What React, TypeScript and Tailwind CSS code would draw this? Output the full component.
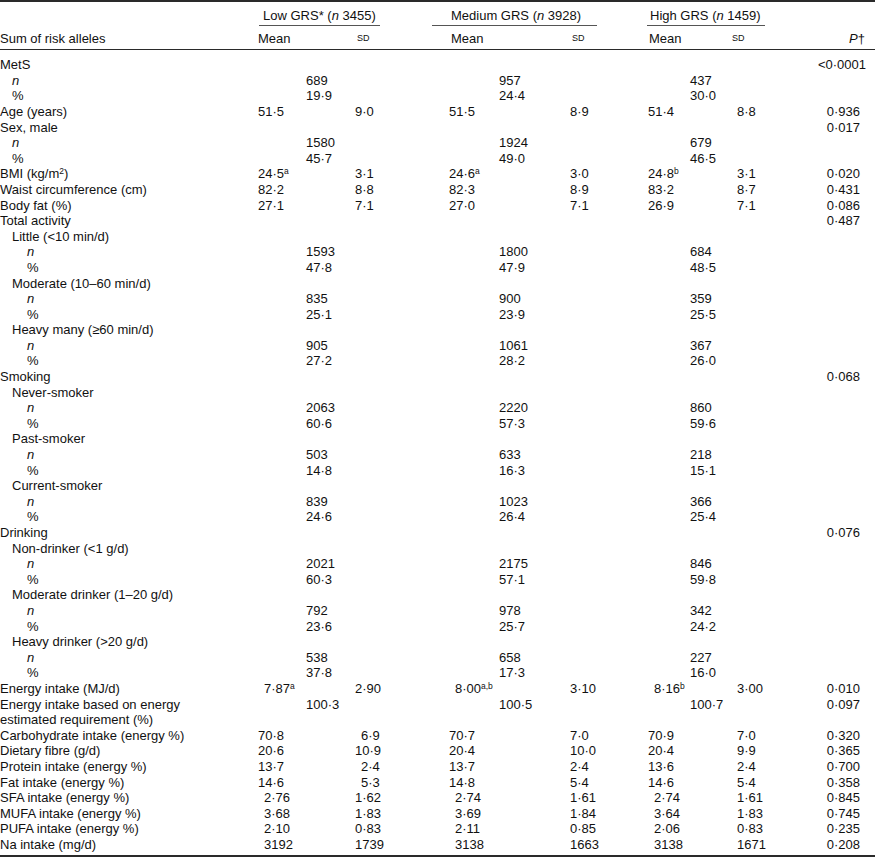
import React from 'react';

type Row = {
    label: React.ReactNode;
    indent?: 0 | 1 | 2;
    span?: string[];
    vals?: string[];
    p?: string;
};

const N = <span className="italic">n</span>;

const rows: Row[] = [
    { label: 'MetS', p: '<0·0001' },
    { label: N, indent: 1, span: ['689', '957', '437'] },
    { label: '%', indent: 1, span: ['19·9', '24·4', '30·0'] },
    { label: 'Age (years)', vals: ['51·5', '9·0', '51·5', '8·9', '51·4', '8·8'], p: '0·936' },
    { label: 'Sex, male', p: '0·017' },
    { label: N, indent: 1, span: ['1580', '1924', '679'] },
    { label: '%', indent: 1, span: ['45·7', '49·0', '46·5'] },
    {
        label: (
            <>
                BMI (kg/m<sup className="text-[8.5px]">2</sup>)
            </>
        ),
        vals: ['24·5^a', '3·1', '24·6^a', '3·0', '24·8^b', '3·1'],
        p: '0·020',
    },
    { label: 'Waist circumference (cm)', vals: ['82·2', '8·8', '82·3', '8·9', '83·2', '8·7'], p: '0·431' },
    { label: 'Body fat (%)', vals: ['27·1', '7·1', '27·0', '7·1', '26·9', '7·1'], p: '0·086' },
    { label: 'Total activity', p: '0·487' },
    { label: 'Little (<10 min/d)', indent: 1 },
    { label: N, indent: 2, span: ['1593', '1800', '684'] },
    { label: '%', indent: 2, span: ['47·8', '47·9', '48·5'] },
    { label: 'Moderate (10–60 min/d)', indent: 1 },
    { label: N, indent: 2, span: ['835', '900', '359'] },
    { label: '%', indent: 2, span: ['25·1', '23·9', '25·5'] },
    { label: 'Heavy many (≥60 min/d)', indent: 1 },
    { label: N, indent: 2, span: ['905', '1061', '367'] },
    { label: '%', indent: 2, span: ['27·2', '28·2', '26·0'] },
    { label: 'Smoking', p: '0·068' },
    { label: 'Never-smoker', indent: 1 },
    { label: N, indent: 2, span: ['2063', '2220', '860'] },
    { label: '%', indent: 2, span: ['60·6', '57·3', '59·6'] },
    { label: 'Past-smoker', indent: 1 },
    { label: N, indent: 2, span: ['503', '633', '218'] },
    { label: '%', indent: 2, span: ['14·8', '16·3', '15·1'] },
    { label: 'Current-smoker', indent: 1 },
    { label: N, indent: 2, span: ['839', '1023', '366'] },
    { label: '%', indent: 2, span: ['24·6', '26·4', '25·4'] },
    { label: 'Drinking', p: '0·076' },
    { label: 'Non-drinker (<1 g/d)', indent: 1 },
    { label: N, indent: 2, span: ['2021', '2175', '846'] },
    { label: '%', indent: 2, span: ['60·3', '57·1', '59·8'] },
    { label: 'Moderate drinker (1–20 g/d)', indent: 1 },
    { label: N, indent: 2, span: ['792', '978', '342'] },
    { label: '%', indent: 2, span: ['23·6', '25·7', '24·2'] },
    { label: 'Heavy drinker (>20 g/d)', indent: 1 },
    { label: N, indent: 2, span: ['538', '658', '227'] },
    { label: '%', indent: 2, span: ['37·8', '17·3', '16·0'] },
    { label: 'Energy intake (MJ/d)', vals: ['>7·87^a', '2·90', '>8·00^a,b', '3·10', '>8·16^b', '3·00'], p: '0·010' },
    {
        label: (
            <>
                Energy intake based on energy
                <br />
                estimated requirement (%)
            </>
        ),
        span: ['100·3', '100·5', '100·7'],
        p: '0·097',
    },
    { label: 'Carbohydrate intake (energy %)', vals: ['70·8', '>6·9', '70·7', '7·0', '70·9', '7·0'], p: '0·320' },
    { label: 'Dietary fibre (g/d)', vals: ['20·6', '10·9', '20·4', '10·0', '20·4', '9·9'], p: '0·365' },
    { label: 'Protein intake (energy %)', vals: ['13·7', '>2·4', '13·7', '2·4', '13·6', '2·4'], p: '0·700' },
    { label: 'Fat intake (energy %)', vals: ['14·6', '>5·3', '14·8', '5·4', '14·6', '5·4'], p: '0·358' },
    { label: 'SFA intake (energy %)', vals: ['>2·76', '1·62', '>2·74', '1·61', '>2·74', '1·61'], p: '0·845' },
    { label: 'MUFA intake (energy %)', vals: ['>3·68', '1·83', '>3·69', '1·84', '>3·64', '1·83'], p: '0·745' },
    { label: 'PUFA intake (energy %)', vals: ['>2·10', '0·83', '>2·11', '0·85', '>2·06', '0·83'], p: '0·235' },
    { label: 'Na intake (mg/d)', vals: ['>3192', '1739', '>3138', '1663', '>3138', '1671'], p: '0·208' },
];

const indentCls = ['', 'pl-[12px]', 'pl-[27px]'];
const spanCls = ['pl-[48px]', 'pl-[50px]', 'pl-[42px]'];

const Val: React.FC<{ v: string }> = ({ v }) => {
    const shift = v.startsWith('>');
    const [num, sup] = (shift ? v.slice(1) : v).split('^');
    return (
        <div className={shift ? 'pl-[6px]' : ''}>
            {num}
            {sup && <sup className="text-[8.5px]">{sup}</sup>}
        </div>
    );
};

const GRID = 'grid grid-cols-[258px_97px_94px_121px_78px_89px_53px_85px]';

const App: React.FC = () => {
    return (
        <div className="w-[875px] bg-white text-[#111] text-[13px] leading-[15.6px] font-['Liberation_Sans',Arial,sans-serif]">
            <div className="border-t-2 border-b border-[#2a2a2a] pt-[6px] pb-[3px]">
                {/* group headings */}
                <div className="flex">
                    <div className="w-[259px]" />
                    <div className="w-[121px] border-b border-[#555] pl-[4px] pb-[1px]">
                        Low GRS* (<span className="italic">n</span> 3455)
                    </div>
                    <div className="w-[52px]" />
                    <div className="w-[165px] border-b border-[#555] pl-[19px] pb-[1px]">
                        Medium GRS (<span className="italic">n</span> 3928)
                    </div>
                    <div className="w-[50px]" />
                    <div className="w-[118px] border-b border-[#555] pl-[3px] pb-[1px]">
                        High GRS (<span className="italic">n</span> 1459)
                    </div>
                </div>
                <div className={`${GRID} mt-[5px]`}>
                    <div>Sum of risk alleles</div>
                    <div>Mean</div>
                    <div className="pl-[2px] text-[9px]">SD</div>
                    <div className="pl-[2px]">Mean</div>
                    <div className="pl-[2px] text-[9px]">SD</div>
                    <div className="pl-[1px]">Mean</div>
                    <div className="-ml-[5px] text-[9px]">SD</div>
                    <div className="text-right pr-[10px]">
                        <span className="italic">P</span>†
                    </div>
                </div>
            </div>

            <div className="border-b-2 border-[#2a2a2a] pt-[7px] pb-[3px]">
                {rows.map((r, i) => (
                    <div key={i} className={GRID}>
                        <div className={indentCls[r.indent ?? 0]}>{r.label}</div>
                        {r.vals ? (
                            r.vals.map((v, j) => <Val key={j} v={v} />)
                        ) : (
                            <>
                                <div className={spanCls[0]}>{r.span?.[0]}</div>
                                <div />
                                <div className={spanCls[1]}>{r.span?.[1]}</div>
                                <div />
                                <div className={spanCls[2]}>{r.span?.[2]}</div>
                                <div />
                            </>
                        )}
                        <div className={r.p === '<0·0001' ? 'text-right pr-[9px] -ml-[20px]' : 'text-right pr-[15px]'}>
                            {r.p}
                        </div>
                    </div>
                ))}
            </div>
        </div>
    );
};

export default App;
